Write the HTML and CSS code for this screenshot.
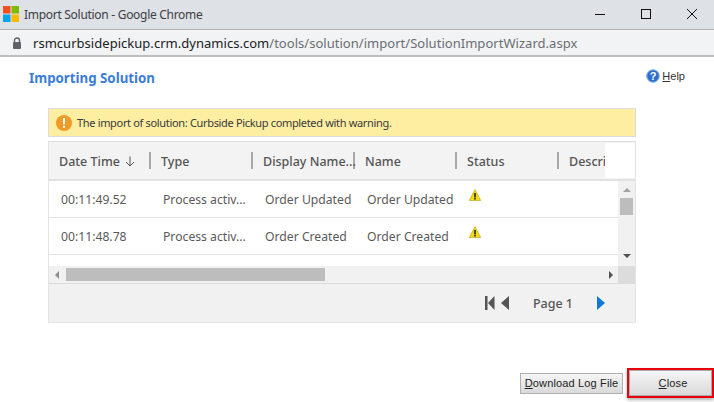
FILE: index.html
```html
<!DOCTYPE html>
<html lang="en">
<head>
  <meta charset="UTF-8" />
  <title>Import Solution - Google Chrome</title>
  <link rel="stylesheet" href="styles.css">
</head>
<body>
  <div class="titlebar">
    <svg class="ms-logo" width="16" height="16" viewBox="0 0 16 16">
      <rect x="0" y="0" width="7.5" height="7.5" fill="#f25022"/>
      <rect x="8.5" y="0" width="7.5" height="7.5" fill="#7fba00"/>
      <rect x="0" y="8.5" width="7.5" height="7.5" fill="#00a4ef"/>
      <rect x="8.5" y="8.5" width="7.5" height="7.5" fill="#ffb900"/>
    </svg>
    <span class="window-title">Import Solution - Google Chrome</span>
    <div class="window-controls">
      <svg width="12" height="12" viewBox="0 0 12 12"><path d="M1 6.5h10" stroke="#111" fill="none"/></svg>
      <svg width="12" height="12" viewBox="0 0 12 12"><rect x="1.5" y="1.5" width="9" height="9" stroke="#111" fill="none"/></svg>
      <svg width="12" height="12" viewBox="0 0 12 12"><path d="M1 1l10 10M11 1L1 11" stroke="#111" fill="none"/></svg>
    </div>
  </div>
  <div class="addressbar">
    <svg width="10" height="13" viewBox="0 0 10 13"><path d="M2.5 5V3.5a2.5 2.5 0 0 1 5 0V5" stroke="#5f6368" stroke-width="1.4" fill="none"/><rect x="1" y="5" width="8" height="7" rx="1" fill="#5f6368"/></svg>
    <span class="url"><span class="host">rsmcurbsidepickup.crm.dynamics.com</span>/tools/solution/import/SolutionImportWizard.aspx</span>
  </div>

  <div class="heading">
    <h1>Importing Solution</h1>
    <a class="help">
      <svg width="14" height="14" viewBox="0 0 14 14">
        <circle cx="7" cy="7" r="6.3" fill="#2f6fc9" stroke="#8fb4e6"/>
        <text x="7" y="10.5" text-anchor="middle" class="help-mark">?</text>
      </svg>
      <span><u>H</u>elp</span>
    </a>
  </div>

  <div class="panel">
    <div class="message">
      <svg width="16" height="16" viewBox="0 0 16 16">
        <circle cx="8" cy="8" r="8" fill="#f09a28"/>
        <rect x="7" y="3" width="2" height="6.5" fill="#fff"/>
        <rect x="7" y="10.8" width="2" height="2" fill="#fff"/>
      </svg>
      <span>The import of solution: Curbside Pickup completed with warning.</span>
    </div>

    <div class="grid">
      <div class="grid-head">
        <div class="columns">
          <div class="th">Date Time <svg width="10" height="11" viewBox="0 0 10 11"><path d="M5 0.5v9.5M1 6l4 4 4-4" stroke="#555" fill="none"/></svg></div>
          <div class="th">Type</div>
          <div class="th">Display Name...</div>
          <div class="th">Name</div>
          <div class="th">Status</div>
          <div class="th th-last">Descri</div>
        </div>
        <div class="head-corner"></div>
      </div>

      <div class="grid-body">
        <div class="rows">
          <div class="row">
            <div class="td">00:11:49.52</div>
            <div class="td">Process activ...</div>
            <div class="td">Order Updated</div>
            <div class="td">Order Updated</div>
            <div class="td td-icon">
              <svg width="12" height="12" viewBox="0 0 12 12"><path d="M6 0.5L11.7 11.5H0.3z" fill="#f6dd0f" stroke="#b09a10" stroke-width="0.6"/><rect x="5.2" y="4" width="1.6" height="4.5" fill="#222"/><rect x="5.2" y="9" width="1.6" height="1.5" fill="#222"/></svg>
            </div>
          </div>
          <div class="row">
            <div class="td">00:11:48.78</div>
            <div class="td">Process activ...</div>
            <div class="td">Order Created</div>
            <div class="td">Order Created</div>
            <div class="td td-icon">
              <svg width="12" height="12" viewBox="0 0 12 12"><path d="M6 0.5L11.7 11.5H0.3z" fill="#f6dd0f" stroke="#b09a10" stroke-width="0.6"/><rect x="5.2" y="4" width="1.6" height="4.5" fill="#222"/><rect x="5.2" y="9" width="1.6" height="1.5" fill="#222"/></svg>
            </div>
          </div>
          <div class="row-partial">
            <svg width="10" height="4" viewBox="0 0 10 4"><path d="M0.5 4V0.5h6l3 3V4" stroke="#8a94a6" fill="#f4f6fa"/><path d="M2 2.5h4" stroke="#8a94a6"/></svg>
          </div>
        </div>
        <div class="vscroll">
          <span class="tri tri-up"></span>
          <span class="vthumb"></span>
          <span class="tri tri-down"></span>
        </div>
      </div>

      <div class="hscroll">
        <span class="tri tri-left"></span>
        <div class="htrack"><span class="hthumb"></span></div>
        <span class="tri tri-right"></span>
        <span class="scroll-corner"></span>
      </div>

      <div class="pager">
        <svg width="24" height="14" viewBox="0 0 24 14">
          <rect x="0" y="0" width="2.5" height="14" fill="#555"/>
          <path d="M9.5 0v14L3 7zM24 0v14L16 7z" fill="#555"/>
        </svg>
        <span class="page-label">Page 1</span>
        <svg width="8" height="14" viewBox="0 0 8 14"><path d="M0 0l8 7-8 7z" fill="#0f78d4"/></svg>
      </div>
    </div>
  </div>

  <div class="actions">
    <button class="btn btn-log"><u>D</u>ownload Log File</button>
    <button class="btn btn-close"><u>C</u>lose</button>
  </div>
</body>
</html>
```

FILE: styles.css
```css
html, body { margin: 0; height: 402px; overflow: hidden; }
body { width: 714px; background: #fff; font-family: "Noto Sans", sans-serif; color: #505050; }

.titlebar { display: flex; align-items: center; height: 28px; padding: 0 0 1px 3px; background: #dee1e6; border-bottom: 1px solid #b4b4b6; }
.ms-logo { margin-right: 5px; }
.window-title { font-size: 12px; color: #3c4043; letter-spacing: -0.29px; }
.window-controls { display: flex; gap: 34px; margin-left: auto; padding-right: 16px; }

.addressbar { display: flex; align-items: center; gap: 11px; height: 24px; padding: 1px 0 0 12px; background: #f1f3f4; border-bottom: 2px solid #bdbdbd; }
.url { font-size: 13px; color: #6b6e73; letter-spacing: 0.03px; }
.host { color: #202124; }

.heading { display: flex; justify-content: space-between; padding: 11px 29px 0 29px; height: 24px; }
h1 { margin: 0; font-size: 13.3px; font-weight: 700; color: #3b7dd8; line-height: 20px; }
.help { display: flex; align-items: center; gap: 2px; height: 16px; font-family: "Liberation Sans", sans-serif; font-size: 11px; color: #333; }
.help-mark { font: bold 11px "Liberation Sans", sans-serif; fill: #fff; }

.panel { width: 588px; margin: 16px 0 0 48px; }
.message { display: flex; align-items: center; gap: 5px; height: 27px; padding-left: 7px; background: #fdeea2; border: 1px solid #dcdcdc; font-size: 11px; letter-spacing: -0.33px; color: #3a3a3a; }

.grid { margin-top: 4px; border: 1px solid #e4e4e4; border-top: 1px solid #dedede; background: #fff; }
.grid-head { display: flex; justify-content: space-between; height: 37px; background: #f3f3f3; border-bottom: 2px solid #e2e2e2; }
.columns { display: grid; grid-template-columns: repeat(5, 102px) 46px; align-items: center; overflow: hidden; }
.th { display: flex; align-items: center; gap: 5px; height: 17px; padding: 2px 0 0 10px; font-size: 12.5px; font-weight: 500; color: #555; border-right: 2px solid #a9a9a9; box-sizing: border-box; white-space: nowrap; }
.th-last { border-right: 0; }
.head-corner { width: 30px; margin: 1px 0; background: #fff; }

.grid-body { display: flex; height: 85px; }
.rows { flex: 1; overflow: hidden; }
.row { display: grid; grid-template-columns: repeat(5, 102px); height: 36px; align-items: center; border-bottom: 1px solid #e2e2e2; }
.row-partial { height: 11px; padding: 8px 0 0 419px; box-sizing: border-box; overflow: hidden; }
.td { padding-left: 12px; font-size: 12.2px; color: #5a5a5a; white-space: nowrap; }
.td-icon { display: flex; align-self: start; padding-top: 8px; }

.vscroll { display: flex; flex-direction: column; align-items: center; justify-content: space-between; width: 17px; background: #f1f1f1; padding: 7px 0 8px; box-sizing: border-box; }
.vthumb { width: 13px; height: 17px; margin: 6px 0 auto; background: #bdbdbd; }

.tri { width: 0; height: 0; border: 4px solid transparent; }
.tri-up { border-top: 0; border-bottom-color: #a3a3a3; }
.tri-down { border-bottom: 0; border-top-color: #505050; }
.tri-left { border-left: 0; border-right-color: #8f8f8f; }
.tri-right { border-right: 0; border-left-color: #505050; }

.hscroll { display: flex; align-items: center; height: 17px; background: #f1f1f1; border-bottom: 1px solid #dcdcdc; padding-left: 6px; }
.htrack { flex: 1; margin-left: 7px; margin-right: 5px; }
.hthumb { display: block; width: 259px; height: 13px; background: #bdbdbd; }
.scroll-corner { width: 17px; height: 17px; margin-left: 5px; background: #dcdcdc; }

.pager { display: flex; align-items: center; justify-content: flex-end; height: 38px; padding-right: 30px; background: #f1f1f1; }
.page-label { margin: 0 24px; font-size: 12.5px; font-weight: 500; color: #555; }

.actions { display: flex; justify-content: flex-end; align-items: center; gap: 4px; margin-top: 45px; }
.btn { font-family: "Liberation Sans", sans-serif; font-size: 11px; letter-spacing: 0.15px; color: #222; background: linear-gradient(#f6f6f6, #d9d9d9); border: 1px solid #b0b0b0; padding: 0; }
.btn-log { width: 103px; height: 21px; }
.btn-close { width: 87px; height: 30px; padding-left: 5px; border: 2px solid #e8000b; box-shadow: inset 0 0 0 1px #aaa, 0 2px 3px rgba(0, 0, 0, 0.3); }
```
